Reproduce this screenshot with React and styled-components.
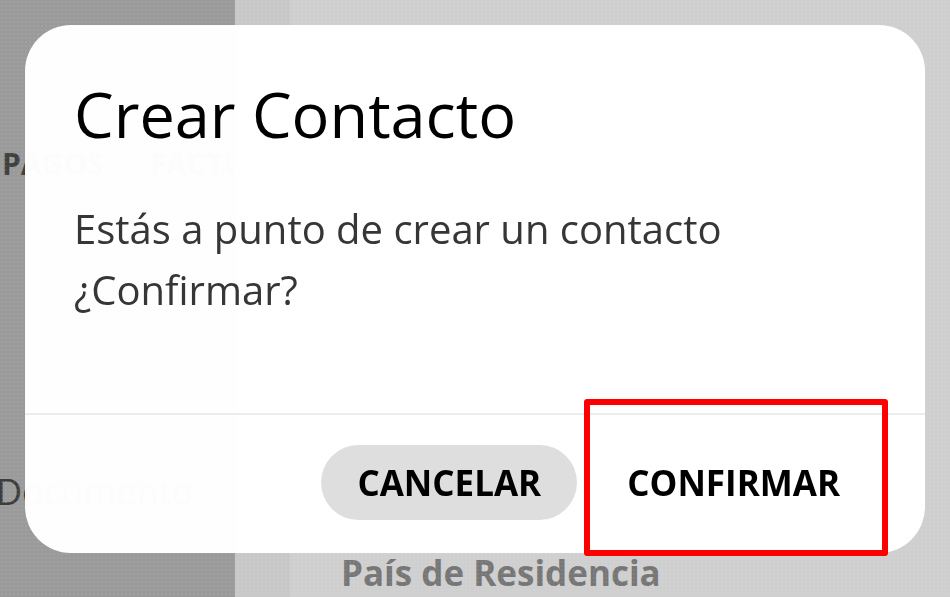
import React from 'react'
import styled, { createGlobalStyle } from 'styled-components'

const GlobalStyle = createGlobalStyle`
  html, body {
    margin: 0;
    padding: 0;
    width: 100%;
    height: 100%;
    overflow: hidden;
    font-family: "Open Sans", "Noto Sans", sans-serif;
  }
  * { box-sizing: border-box; }
`

const App = () => {
	return (
		<>
			<GlobalStyle />
			<Page>
				<Sidebar>
					<NavRow>
						<NavItem>PAGOS</NavItem>
						<NavItem>FACTURAS</NavItem>
					</NavRow>
					<SideLink>Documento</SideLink>
				</Sidebar>
				<Main>
					<Field>
						<Label>País de Residencia</Label>
					</Field>
				</Main>
			</Page>

			<Backdrop>
				<Dialog role="dialog" aria-labelledby="dialog-title">
					<Header>
						<Title id="dialog-title">Crear Contacto</Title>
					</Header>
					<Body>
						<p>Estás a punto de crear un contacto</p>
						<p>¿Confirmar?</p>
					</Body>
					<Footer>
						<Button $filled>CANCELAR</Button>
						<Button $highlight>CONFIRMAR</Button>
					</Footer>
				</Dialog>
			</Backdrop>
		</>
	)
}

export default App



const Page = styled.div`
	display: grid;
	grid-template-columns: 235px 1fr;
	width: 100vw;
	height: 100vh;
`

const Sidebar = styled.aside`
	background-color: #bcbcbc;
	padding-top: 143px;
	overflow: hidden;
`

const NavRow = styled.div`
	display: flex;
	gap: 46px;
	padding-left: 2px;
	white-space: nowrap;
`

const NavItem = styled.span`
	font-size: 30px;
	font-weight: 700;
	color: #4e4e4e;
`

const SideLink = styled.div`
	margin-top: 283px;
	margin-left: -4px;
	font-size: 36px;
	color: #4a4a4a;
	white-space: nowrap;
`

const Main = styled.main`
	background: linear-gradient(to right, #f4f4f4 55px, #fdfdfd 55px);
	padding: 549px 0 0 106px;
	overflow: hidden;
`

const Field = styled.div`
	display: flex;
	flex-direction: column;
`

const Label = styled.label`
	font-size: 35px;
	font-weight: 700;
	color: #919191;
	white-space: nowrap;
`

const Backdrop = styled.div`
	position: fixed;
	inset: 0;
	background-color: rgba(0, 0, 0, 0.18);
	background-image: radial-gradient(circle, rgba(255, 255, 255, 0.07) 1px, transparent 1.3px);
	background-size: 4px 4px;
`

const Dialog = styled.section`
	position: absolute;
	left: 25px;
	top: 25px;
	width: 900px;
	height: 528px;
	border-radius: 46px;
	background: rgba(255, 255, 255, 0.985);
	display: flex;
	flex-direction: column;
	overflow: visible;
`

const Header = styled.header`
	padding: 51px 49px 0;
`

const Title = styled.h2`
	margin: 0;
	font-size: 63px;
	font-weight: 400;
	line-height: 1.2;
	color: #000;
`

const Body = styled.div`
	flex: 1;
	padding: 46px 49px 0;
	font-size: 40px;
	line-height: 61px;
	color: #363636;

	p {
		margin: 0;
	}
`

const Footer = styled.footer`
	display: flex;
	justify-content: flex-end;
	align-items: center;
	gap: 14px;
	height: 140px;
	padding: 0 49px 3px 0;
	border-top: 2px solid #ececec;
`

const Button = styled.button`
	position: relative;
	height: 75px;
	padding: 0 36px;
	border: none;
	border-radius: 38px;
	background: ${p => (p.$filled ? '#dedede' : 'transparent')};
	font-family: "Open Sans", "Noto Sans", sans-serif;
	font-size: 35px;
	font-weight: 700;
	color: #000;
	cursor: pointer;

	${p => p.$highlight && `
		&::after {
			content: '';
			position: absolute;
			left: -7px;
			right: -12px;
			top: -46px;
			bottom: -36px;
			border: 6px solid #ff0000;
			border-radius: 3px;
			pointer-events: none;
		}
	`}
`
